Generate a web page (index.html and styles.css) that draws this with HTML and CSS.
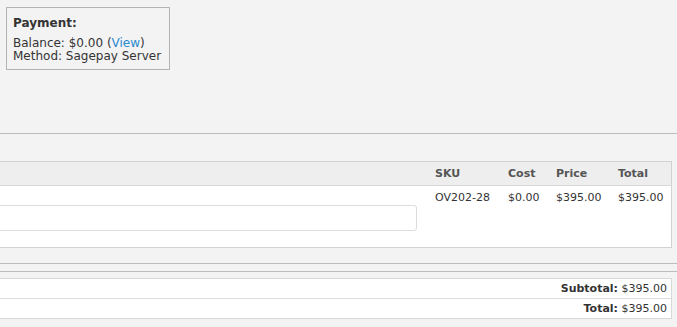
FILE: index.html
```html
<!DOCTYPE html>
<html lang="en">
<head>
  <meta charset="UTF-8" />
  <title>Order</title>
  <link rel="stylesheet" href="styles.css">
</head>
<body>

<div class="payment">
  <h4>Payment:</h4>
  <p>Balance: $0.00 (<a href="#">View</a>)<br>Method: Sagepay Server</p>
</div>

<div class="rule first"></div>

<table class="items">
  <thead>
    <tr>
      <th class="desc"></th>
      <th class="sku">SKU</th>
      <th class="cost">Cost</th>
      <th class="price">Price</th>
      <th class="total">Total</th>
    </tr>
  </thead>
  <tbody>
    <tr>
      <td class="desc"><input type="text" /></td>
      <td>OV202-28</td>
      <td>$0.00</td>
      <td>$395.00</td>
      <td>$395.00</td>
    </tr>
  </tbody>
</table>

<div class="rule second"></div>
<div class="rule third"></div>

<div class="totals">
  <div class="line"><b>Subtotal:</b> $395.00</div>
  <div class="line"><b>Total:</b> $395.00</div>
</div>

</body>
</html>
```

FILE: styles.css
```css
body {
  margin: 0;
  background: #f3f3f3;
  font-family: "DejaVu Sans", sans-serif;
  font-size: 12px;
  color: #333;
  overflow: hidden;
}
.payment {
  display: inline-block;
  margin: 7px 0 0 6px;
  padding: 8px 8px 6px 6px;
  border: 1px solid #b4b4b4;
}
.payment h4 {
  margin: 0 0 7px;
  font-size: 12px;
  line-height: 14px;
}
.payment p {
  margin: 0;
  line-height: 13px;
}
.payment a {
  color: #2a8ad0;
  text-decoration: none;
}
.rule {
  border-top: 1px solid #bcbcbc;
}
.rule.first {
  margin-top: 63px;
}
.rule.second {
  margin-top: 15px;
}
.rule.third {
  margin-top: 7px;
}
.items {
  margin: 27px 0 0 -10px;
  width: calc(100% + 5px);
  table-layout: fixed;
  border-collapse: collapse;
  background: #fff;
  border: 1px solid #d2d2d2;
  font-size: 11px;
}
.items th {
  background: #eeeeee;
  color: #555;
  text-align: left;
  height: 23px;
  padding: 0;
  border-bottom: 1px solid #d8d8d8;
}
.items td {
  vertical-align: top;
  padding: 5px 0 0;
  height: 56px;
}
.items .desc { width: 444px; }
.items .sku { width: 73px; }
.items .cost { width: 48px; }
.items .price { width: 62px; }
.items td input {
  display: block;
  margin: 14px 0 0 0;
  width: 426px;
  height: 26px;
  box-sizing: border-box;
  border: 1px solid #dcdcdc;
  border-radius: 3px;
  background: #fff;
}
.totals {
  margin: 6px 5px 0 -10px;
  background: #fff;
  border: 1px solid #d8d8d8;
  font-size: 11px;
}
.totals .line {
  text-align: right;
  height: 19px;
  line-height: 19px;
  padding-right: 4px;
}
.totals .line + .line {
  border-top: 1px solid #dedede;
}
```
